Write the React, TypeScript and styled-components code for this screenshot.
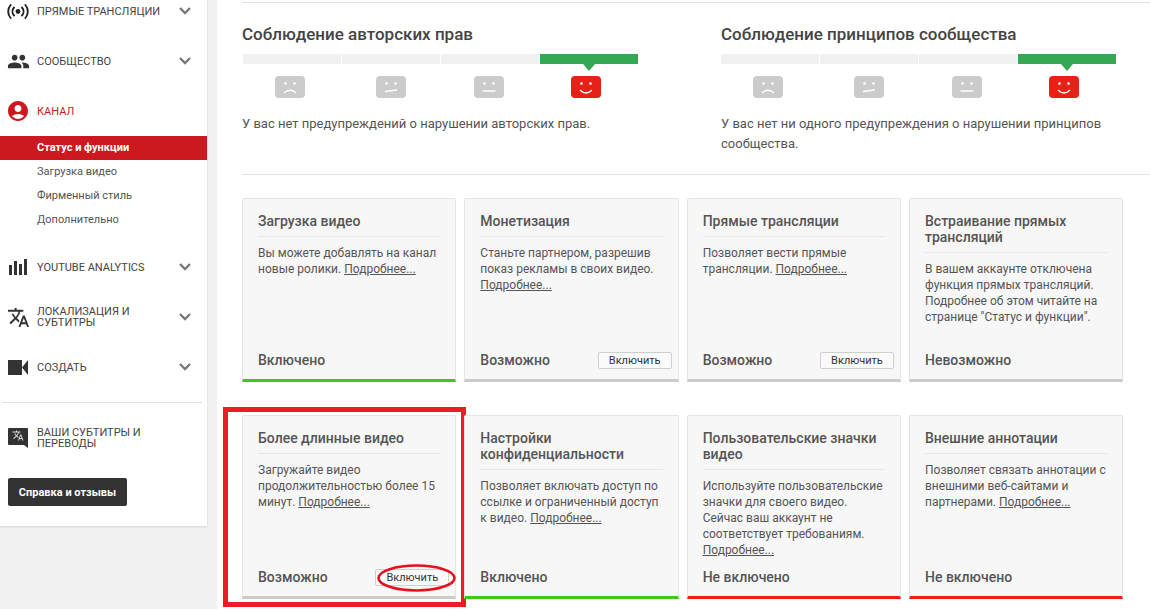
import React from 'react';
import styled, { createGlobalStyle } from 'styled-components';
import { MdPeople, MdAccountCircle, MdTranslate } from 'react-icons/md';

const Global = createGlobalStyle`
  html, body { margin: 0; padding: 0; height: 100%; overflow: hidden; background: #f1f1f1; }
  body { font-family: Roboto, "Noto Sans", sans-serif; color: #444; }
  * { box-sizing: border-box; }
`;

const Page = styled.div`
  display: flex;
  width: 1150px;
  height: 609px;
  overflow: hidden;
`;

const Sidebar = styled.nav`
  width: 207px;
  height: 540px;
  margin-top: -14px;
  background: #fff;
  box-shadow: 0 1px 2px rgba(0, 0, 0, 0.12);
  flex: none;
`;

const NavItem = styled.div`
  height: 50px;
  display: flex;
  align-items: center;
  padding-left: 8px;
  padding-right: 16px;
`;

const NavIcon = styled.span<{ $color?: string }>`
  width: 20px;
  height: 20px;
  margin-right: 9px;
  flex: none;
  display: flex;
  align-items: center;
  justify-content: center;
  color: ${p => p.$color || '#333'};
  svg { flex: none; }
`;

const NavLabel = styled.span<{ $active?: boolean }>`
  flex: 1;
  font-size: 11px;
  line-height: 11px;
  text-transform: uppercase;
  color: ${p => (p.$active ? '#cc181e' : '#444')};
`;

const ChevronSvg = styled.svg`
  flex: none;
  display: block;
`;

const SubItem = styled.div<{ $active?: boolean }>`
  height: 24px;
  line-height: 24px;
  padding-left: 37px;
  font-size: 11px;
  background: ${p => (p.$active ? '#cc181e' : 'transparent')};
  color: ${p => (p.$active ? '#fff' : '#555')};
  font-weight: ${p => (p.$active ? 700 : 400)};
`;

const NavGap = styled.div`
  height: 10px;
`;

const NavRule = styled.hr`
  margin: 10px 5px 10px 2px;
  border: 0;
  border-top: 1px solid #e2e2e2;
`;

const HelpButton = styled.button`
  display: block;
  margin: 15px 0 0 8px;
  width: 119px;
  height: 28px;
  background: #333;
  color: #fff;
  border: 0;
  border-radius: 2px;
  font: 700 11px Roboto, sans-serif;
`;

const Main = styled.main`
  margin-left: 10px;
  flex: 1;
  background: #fff;
  padding: 2px 0 0 25px;
  height: 609px;
`;

const Sections = styled.div`
  display: flex;
  gap: 79px;
  height: 173px;
  border-top: 1px solid #e2e2e2;
  border-bottom: 1px solid #e2e2e2;
  padding-top: 21px;
`;

const Section = styled.section`
  width: 400px;
`;

const SectionTitle = styled.h2`
  margin: 0;
  font-size: 17px;
  line-height: 20px;
  font-weight: 500;
  color: #444;
`;

const Meter = styled.div<{ $inset: number }>`
  display: grid;
  grid-template-columns: repeat(4, 98px);
  gap: 1px;
  margin: 10px 0 0 ${p => p.$inset}px;
`;

const Segment = styled.div`
  display: flex;
  flex-direction: column;
  align-items: center;
`;

const SegBar = styled.div<{ $on?: boolean }>`
  width: 100%;
  height: 10px;
  background: ${p => (p.$on ? '#34a853' : '#f1f1f1')};
  position: relative;
  ${p =>
    p.$on
      ? `&::after { content: ''; position: absolute; left: 50%; top: 10px; margin-left: -6px;
         border: 6px solid transparent; border-bottom: 0; border-top: 7px solid #34a853; }`
      : ''}
`;

const FaceSvg = styled.svg<{ $nudge: number }>`
  display: block;
  margin-top: 12px;
  transform: translateX(${p => p.$nudge}px);
`;

const SectionText = styled.p`
  margin: 16px 0 0;
  font-size: 13px;
  line-height: 20px;
  color: #555;
`;

const Cards = styled.div`
  display: grid;
  grid-template-columns: repeat(4, 214.33px);
  grid-auto-rows: 184px;
  column-gap: 8px;
  row-gap: 33px;
  margin-top: 23px;
`;

const Card = styled.article<{ $bar: string }>`
  position: relative;
  display: flex;
  flex-direction: column;
  background: #f7f7f7;
  border: 1px solid #e5e5e5;
  border-bottom: 3px solid ${p => p.$bar};
  border-radius: 2px 2px 0 0;
  padding: 14px 15px 10px;
`;

const CardTitle = styled.h3`
  margin: 0;
  padding-bottom: 7px;
  border-bottom: 1px solid #e6e6e6;
  font-size: 14px;
  line-height: 16px;
  font-weight: 500;
  color: #555;
`;

const CardText = styled.p`
  flex: 1;
  margin: 8px 0 0;
  font-size: 12px;
  line-height: 16px;
  color: #555;
`;

const MoreLink = styled.a`
  color: #555;
  text-decoration: underline;
`;

const CardFoot = styled.div`
  display: flex;
  align-items: center;
  justify-content: space-between;
  height: 18px;
`;

const Status = styled.span`
  font-size: 14px;
  font-weight: 500;
  color: #555;
`;

const EnableButton = styled.button`
  width: 74px;
  height: 17px;
  margin-right: -9px;
  padding: 0;
  background: #fafafa;
  border: 1px solid #cfcfcf;
  border-radius: 2px;
  font: 400 11px/15px Roboto, sans-serif;
  color: #333;
`;

const Highlight = styled.div`
  position: absolute;
  left: -20px;
  top: -9px;
  width: 243px;
  height: 200px;
  border: 5px solid #ed1c24;
  pointer-events: none;
`;

const Ellipse = styled.svg`
  position: absolute;
  right: -1px;
  bottom: 4px;
  pointer-events: none;
`;

const Chevron = () => (
  <ChevronSvg width="12" height="8" viewBox="0 0 12 8" fill="none" stroke="#777" strokeWidth="2.3">
    <path d="M1 1l5 5 5-5" />
  </ChevronSvg>
);

const Broadcast = () => (
  <svg width="22" height="15" viewBox="0 0 22 15" fill="none" stroke="#222" strokeWidth="1.9" strokeLinecap="round">
    <circle cx="11" cy="7.5" r="2.4" fill="#222" stroke="none" />
    <path d="M7 3.5a6 6 0 0 0 0 8M15 3.5a6 6 0 0 1 0 8" />
    <path d="M3.6 1a10 10 0 0 0 0 13M18.4 1a10 10 0 0 1 0 13" />
  </svg>
);

const Bars = () => (
  <svg width="18" height="16" viewBox="0 0 18 16" fill="#333">
    <rect x="0" y="6" width="3" height="10" />
    <rect x="5" y="2" width="3" height="14" />
    <rect x="10" y="5" width="3" height="11" />
    <rect x="15" y="0" width="3" height="16" />
  </svg>
);

const Camera = () => (
  <svg width="20" height="15" viewBox="0 0 20 15" fill="#333">
    <rect x="0" y="0" width="14" height="15" />
    <path d="M14 7.5L20 0v15z" />
  </svg>
);

const Bubble = () => (
  <svg width="20" height="20" viewBox="0 0 20 20">
    <path d="M1 0h18a1 1 0 0 1 1 1v19l-4-3H1a1 1 0 0 1-1-1V1a1 1 0 0 1 1-1z" fill="#333" />
    <g transform="translate(4 1.5) scale(0.5)" fill="#ddd">
      <path d="M12.87 15.07l-2.54-2.51.03-.03c1.74-1.94 2.98-4.17 3.71-6.53H17V4h-7V2H8v2H1v1.99h11.17C11.5 7.92 10.44 9.75 9 11.35 8.07 10.32 7.3 9.19 6.69 8h-2c.73 1.63 1.73 3.17 2.98 4.56l-5.09 5.02L4 19l5-5 3.11 3.11.76-2.04zM18.5 10h-2L12 22h2l1.12-3h4.75L21 22h2l-4.5-12zm-2.62 7l1.62-4.33L19.12 17h-3.24z" />
    </g>
  </svg>
);

type Mood = 'sad' | 'meh' | 'flat' | 'happy';

const mouths: Record<Mood, string> = {
  sad: 'M9.5 16.5q5.5-4.5 11 0',
  meh: 'M9.5 15.5L20.5 14',
  flat: 'M9 15h12',
  happy: 'M9.5 14.5q5.5 5 11 0',
};

const Face = ({ mood, nudge }: { mood: Mood; nudge: number }) => {
  const fill = mood === 'happy' ? '#e62117' : '#cbcbcb';
  return (
    <FaceSvg $nudge={nudge} width="30" height="22" viewBox="0 0 30 22">
      <rect x="0" y="0" width="30" height="22" rx="4" fill={fill} />
      <circle cx="10.5" cy="7.5" r="1.3" fill="#fff" />
      <circle cx="19.5" cy="7.5" r="1.3" fill="#fff" />
      <path d={mouths[mood]} fill="none" stroke="#fff" strokeWidth="1.4" strokeLinecap="round" />
    </FaceSvg>
  );
};

const moods: { mood: Mood; nudge: number }[] = [
  { mood: 'sad', nudge: -2 },
  { mood: 'meh', nudge: 0 },
  { mood: 'flat', nudge: -1 },
  { mood: 'happy', nudge: -3 },
];

const Rating = ({ inset }: { inset: number }) => (
  <Meter $inset={inset}>
    {moods.map(m => (
      <Segment key={m.mood}>
        <SegBar $on={m.mood === 'happy'} />
        <Face mood={m.mood} nudge={m.nudge} />
      </Segment>
    ))}
  </Meter>
);

const Item = ({ icon, label, chevron = true, active }: { icon: React.ReactNode; label: React.ReactNode; chevron?: boolean; active?: boolean }) => (
  <NavItem>
    <NavIcon $color={active ? '#cc181e' : undefined}>{icon}</NavIcon>
    <NavLabel $active={active}>{label}</NavLabel>
    {chevron && <Chevron />}
  </NavItem>
);

const More = ({ children = 'Подробнее...' }: { children?: string }) => <MoreLink>{children}</MoreLink>;

export default function App() {
  return (
    <Page>
      <Global />
      <Sidebar>
        <Item icon={<Broadcast />} label="Прямые трансляции" />
        <Item icon={<MdPeople size={23} />} label="Сообщество" />
        <Item icon={<MdAccountCircle size={24} />} label="Канал" chevron={false} active />
        <SubItem $active>Статус и функции</SubItem>
        <SubItem>Загрузка видео</SubItem>
        <SubItem>Фирменный стиль</SubItem>
        <SubItem>Дополнительно</SubItem>
        <NavGap />
        <Item icon={<Bars />} label="YouTube Analytics" />
        <Item icon={<MdTranslate size={23} />} label="Локализация и субтитры" />
        <Item icon={<Camera />} label="Создать" />
        <NavRule />
        <Item icon={<Bubble />} label="Ваши субтитры и переводы" chevron={false} />
        <HelpButton>Справка и отзывы</HelpButton>
      </Sidebar>
      <Main>
        <Sections>
          <Section>
            <SectionTitle>Соблюдение авторских прав</SectionTitle>
            <Rating inset={1} />
            <SectionText>У вас нет предупреждений о нарушении авторских прав.</SectionText>
          </Section>
          <Section>
            <SectionTitle>Соблюдение принципов сообщества</SectionTitle>
            <Rating inset={0} />
            <SectionText>У вас нет ни одного предупреждения о нарушении принципов сообщества.</SectionText>
          </Section>
        </Sections>
        <Cards>
          <Card $bar="#3fc81c">
            <CardTitle>Загрузка видео</CardTitle>
            <CardText>Вы можете добавлять на канал новые ролики. <More /></CardText>
            <CardFoot><Status>Включено</Status></CardFoot>
          </Card>
          <Card $bar="#cccccc">
            <CardTitle>Монетизация</CardTitle>
            <CardText>Станьте партнером, разрешив показ рекламы в своих видео. <More /></CardText>
            <CardFoot><Status>Возможно</Status><EnableButton>Включить</EnableButton></CardFoot>
          </Card>
          <Card $bar="#cccccc">
            <CardTitle>Прямые трансляции</CardTitle>
            <CardText>Позволяет вести прямые трансляции. <More /></CardText>
            <CardFoot><Status>Возможно</Status><EnableButton>Включить</EnableButton></CardFoot>
          </Card>
          <Card $bar="#cccccc">
            <CardTitle>Встраивание прямых трансляций</CardTitle>
            <CardText>В вашем аккаунте отключена функция прямых трансляций. Подробнее об этом читайте на странице "Статус и функции".</CardText>
            <CardFoot><Status>Невозможно</Status></CardFoot>
          </Card>
          <Card $bar="#cccccc">
            <CardTitle>Более длинные видео</CardTitle>
            <CardText>Загружайте видео продолжительностью более 15 минут. <More /></CardText>
            <CardFoot><Status>Возможно</Status><EnableButton>Включить</EnableButton></CardFoot>
            <Highlight />
            <Ellipse width="79" height="28" viewBox="0 0 79 28">
              <ellipse cx="39.5" cy="14" rx="38" ry="12.5" fill="none" stroke="#e5121e" strokeWidth="2.6" />
            </Ellipse>
          </Card>
          <Card $bar="#3fc81c">
            <CardTitle>Настройки конфиденциальности</CardTitle>
            <CardText>Позволяет включать доступ по ссылке и ограниченный доступ к видео. <More /></CardText>
            <CardFoot><Status>Включено</Status></CardFoot>
          </Card>
          <Card $bar="#e62117">
            <CardTitle>Пользовательские значки видео</CardTitle>
            <CardText>Используйте пользовательские значки для своего видео. Сейчас ваш аккаунт не соответствует требованиям. <More /></CardText>
            <CardFoot><Status>Не включено</Status></CardFoot>
          </Card>
          <Card $bar="#e62117">
            <CardTitle>Внешние аннотации</CardTitle>
            <CardText>Позволяет связать аннотации с внешними веб-сайтами и партнерами. <More /></CardText>
            <CardFoot><Status>Не включено</Status></CardFoot>
          </Card>
        </Cards>
      </Main>
    </Page>
  );
}
